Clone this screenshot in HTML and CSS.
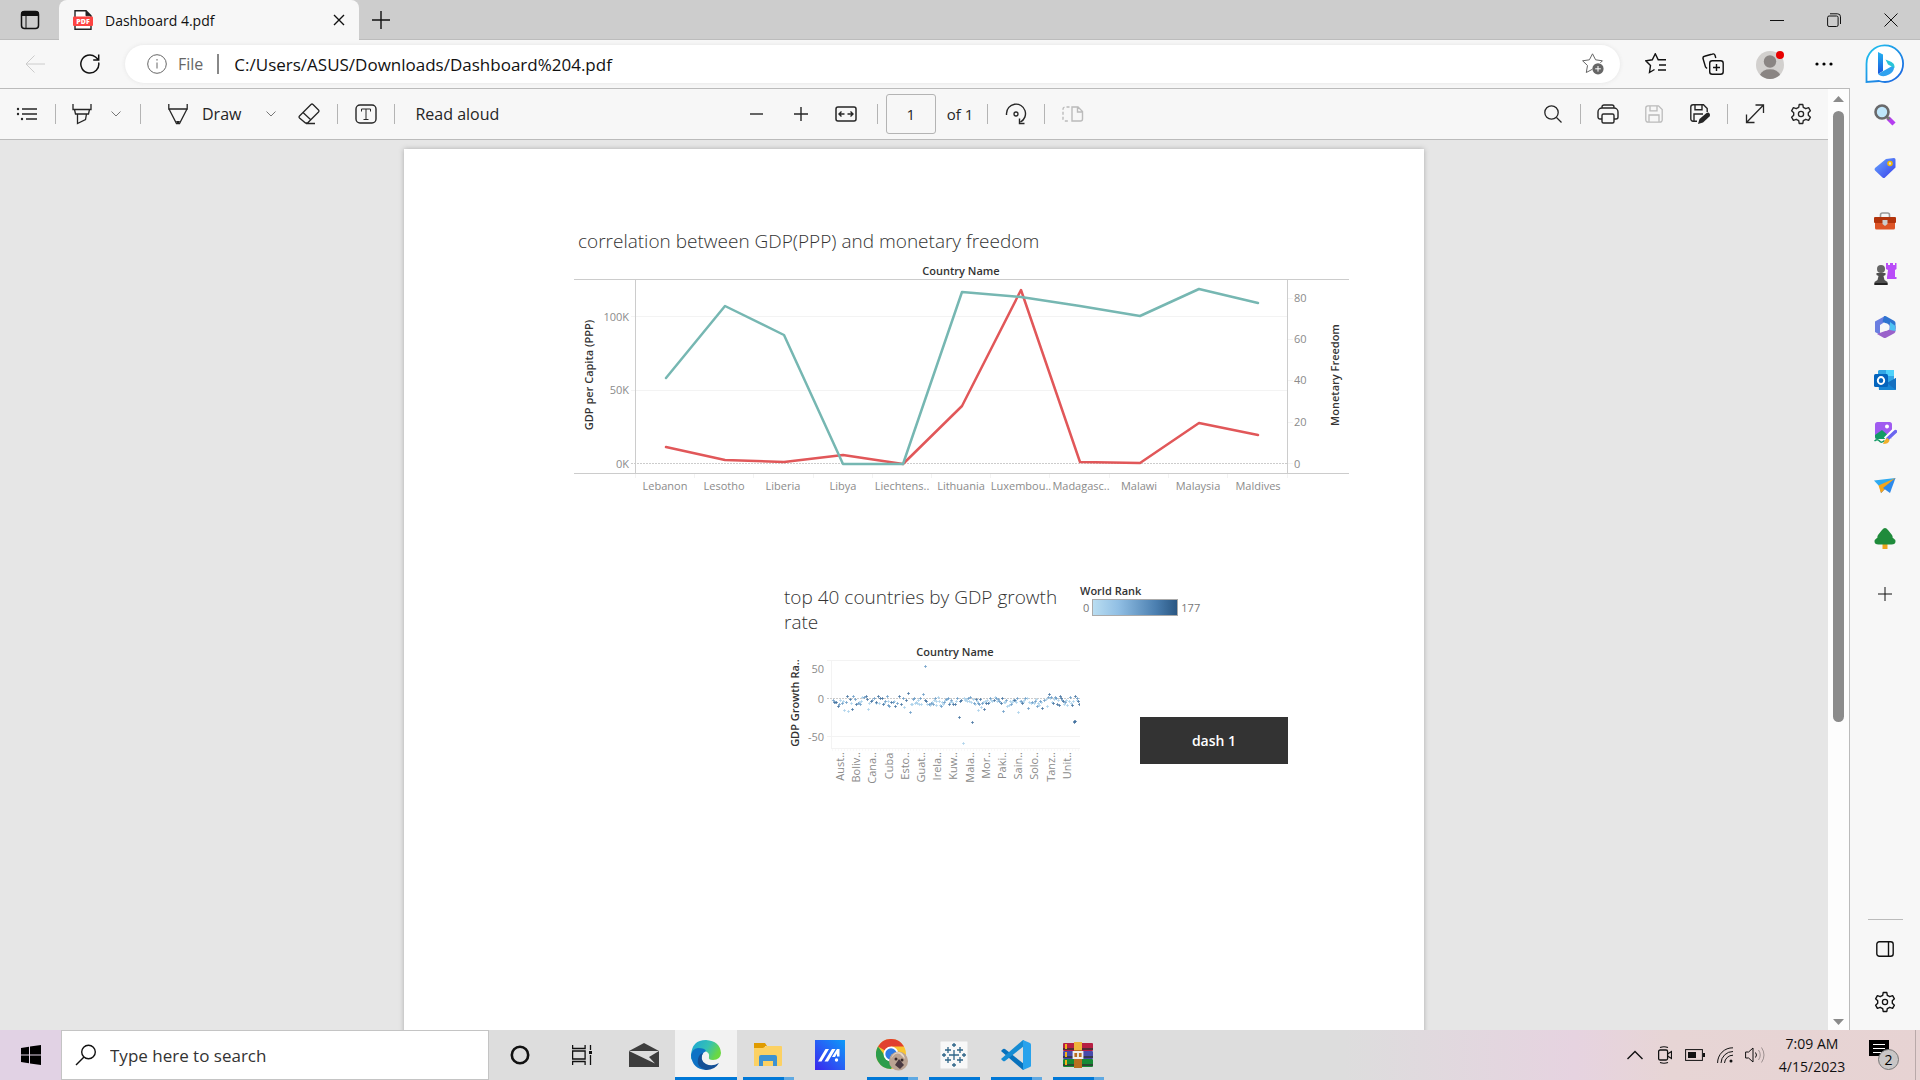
FILE: index.html
```html
<!DOCTYPE html>
<html lang="en">
<head>
<meta charset="utf-8">
<title>Dashboard 4.pdf</title>
<link rel="stylesheet" href="styles.css">
</head>
<body>
<header class="titlebar">
  <button class="tab-menu" aria-label="Tab actions"><svg class="line" width="20" height="20" viewBox="0 0 20 20"><rect x="1.500" y="1.500" width="17" height="17" rx="3" stroke-width="1.500"/><path d="M6 6v12"/><path class="solid" d="M1 6V4a3 3 0 0 1 3-3h12a3 3 0 0 1 3 3v2z"/></svg></button>
  <div class="tab">
    <svg width="20" height="20" viewBox="0 0 20 20"><path d="M2 .8h11l5 5v13.500H2z" fill="#fff" stroke="#222" stroke-width="1.400"/><path d="M13 .8v5h5" fill="#222" stroke="#222"/><rect x="0" y="6.500" width="20" height="9.500" rx="1" fill="#fd4442"/><text x="10" y="14" class="pdf-mark" text-anchor="middle">PDF</text></svg>
    <span class="tab-title">Dashboard 4.pdf</span>
    <button aria-label="Close tab"><svg class="line" width="12" height="12" viewBox="0 0 12 12"><path d="M1 1l10 10M11 1L1 11" stroke-width="1.400"/></svg></button>
  </div>
  <button class="new-tab" aria-label="New tab"><svg class="line" width="18" height="18" viewBox="0 0 18 18"><path d="M9 0v18M0 9h18" stroke-width="1.400"/></svg></button>
  <div class="window-buttons">
    <button aria-label="Minimize"><svg class="line" width="14" height="14" viewBox="0 0 14 14"><path d="M0 7.500h14"/></svg></button>
    <button aria-label="Restore"><svg class="line" width="14" height="14" viewBox="0 0 14 14"><rect x=".6" y="3" width="10.500" height="10.500" rx="1.500"/><path d="M3 .8h7.500a3 3 0 0 1 3 3V11"/></svg></button>
    <button aria-label="Close"><svg class="line" width="14" height="14" viewBox="0 0 14 14"><path d="M.5.5l13 13M13.500.5l-13 13"/></svg></button>
  </div>
</header>

<div class="browser">
  <div class="main">
    <nav class="navbar">
      <button class="back" aria-label="Back"><svg class="line" width="20" height="18" viewBox="0 0 20 18"><path d="M9.500.5L1 9l8.500 8.500M1 9h19"/></svg></button>
      <button class="reload" aria-label="Reload"><svg class="line" width="20" height="20" viewBox="0 0 20 20"><path d="M18.700 8.500A9 9 0 1 1 15.500 3l3 2.800M18.700.5V6h-5.500" stroke-width="1.500"/></svg></button>
      <div class="address">
        <svg class="line info" width="20" height="20" viewBox="0 0 20 20"><circle cx="10" cy="10" r="9.300"/><path d="M10 8.500v6M10 5v1.600"/></svg>
        <span class="scheme">File</span>
        <input type="text" aria-label="Address" value="C:/Users/ASUS/Downloads/Dashboard%204.pdf">
        <button aria-label="Add to favorites"><svg class="line info" width="22" height="22" viewBox="0 0 22 22"><path d="M10.500 16.200L4.300 19.500l1.200-7L.6 7.800l6.800-1L10.500.8l3.100 6 6.800 1-2 2"/><circle cx="16" cy="15.800" r="5.600" fill="#666" stroke="none"/><path d="M16 13v5.600M13.200 15.800h5.600" stroke="#fff"/></svg></button>
      </div>
      <button class="nav-action" aria-label="Favorites"><svg class="line" width="22" height="22" viewBox="0 0 22 22"><path d="M9.500 16.500L4.500 19.500l1-7L.8 7.800l6.500-1 3-6 2.900 6H21M14 12h7M13 17h8" stroke-width="1.400"/></svg></button>
      <button class="nav-action" aria-label="Collections"><svg class="line" width="22" height="22" viewBox="0 0 22 22"><rect x="7.700" y="7.700" width="13.500" height="13.500" rx="2.500" stroke-width="1.400"/><path d="M14.500 11v7M11 14.500h7M5 15.500L3.500 14 1 5.500a2 2 0 0 1 1.500-2.300L10.500 1A2 2 0 0 1 13 2.300L13.800 5" stroke-width="1.400"/></svg></button>
      <button class="nav-action" aria-label="Profile"><svg width="28" height="30" viewBox="0 0 28 30"><circle cx="14" cy="16" r="14" fill="#d2d0ce"/><circle cx="14" cy="12.500" r="6.200" fill="#8a8583"/><path d="M4 25.800a10.500 8 0 0 1 20 0A14 14 0 0 1 4 25.800z" fill="#8a8583"/><circle cx="24" cy="6" r="4" fill="#e80000"/></svg></button>
      <button class="nav-menu" aria-label="Settings and more"><svg width="18" height="4" viewBox="0 0 18 4"><circle cx="2" cy="2" r="1.600"/><circle cx="9" cy="2" r="1.600"/><circle cx="16" cy="2" r="1.600"/></svg></button>
    </nav>

    <div class="document">
      <div class="document-body">
        <div class="toolbar">
          <div class="tools tools-left">
            <button class="w40" aria-label="Contents"><svg class="line" width="22" height="14" viewBox="0 0 22 14"><path d="M6 2h15M6 7h15M10 12h11" stroke-width="1.300"/><circle class="solid" cx="2" cy="2" r="1.200"/><circle class="solid" cx="2" cy="7" r="1.200"/><circle class="solid" cx="6" cy="12" r="1.200"/></svg></button>
            <span class="sep"></span>
            <button class="w36" aria-label="Highlight"><svg class="line" width="20" height="22" viewBox="0 0 20 22"><path d="M1 1v5.500h18V1M2.500 6.500L3.500 11h13l1-4.500M5.500 11v9.500l8-4 1-5.500" stroke-width="1.300"/></svg></button>
            <button class="w32" aria-label="Highlight colors"><svg class="line faint" width="10" height="6" viewBox="0 0 10 6"><path d="M.5.5L5 5 9.500.5"/></svg></button>
            <span class="sep"></span>
            <button class="draw"><svg class="line" width="20" height="22" viewBox="0 0 20 22"><path d="M.8 1v5h18.400V1M1 6l7.500 14.500h3L19 6" stroke-width="1.300"/><path class="solid" d="M8 18h4l-1.500 3h-1z"/></svg>Draw</button>
            <button class="w36" aria-label="Draw options"><svg class="line faint" width="10" height="6" viewBox="0 0 10 6"><path d="M.5.5L5 5 9.500.5"/></svg></button>
            <button class="w40" aria-label="Erase"><svg class="line" width="22" height="22" viewBox="0 0 22 22"><path d="M1.500 13L13 1.500a1.500 1.500 0 0 1 2 0L20.500 7a1.500 1.500 0 0 1 0 2L9.500 20H7.500l-6-5a1.500 1.500 0 0 1 0-2zM5 9.500l8 7.500M8 20.500h9" stroke-width="1.300"/></svg></button>
            <span class="sep"></span>
            <button class="w40" aria-label="Add text"><svg class="line" width="22" height="20" viewBox="0 0 22 20"><rect x="1" y="1" width="20" height="18" rx="4" stroke-width="1.400"/><path d="M6.500 7.500V5h9v2.500M11 5v10.500M8.500 15.500h5"/></svg></button>
            <span class="sep"></span>
            <button class="read">Read aloud</button>
          </div>
          <div class="tools">
            <button class="w44" aria-label="Zoom out"><svg class="line" width="14" height="14" viewBox="0 0 14 14"><path d="M0 7h13" stroke-width="1.400"/></svg></button>
            <button class="w44" aria-label="Zoom in"><svg class="line" width="14" height="14" viewBox="0 0 14 14"><path d="M7 0v14M0 7h14" stroke-width="1.400"/></svg></button>
            <button class="w46" aria-label="Fit to width"><svg class="line" width="22" height="16" viewBox="0 0 22 16"><rect x="1" y="1" width="20" height="14" rx="2" stroke-width="1.500"/><path d="M9.500 8H4M6.500 5.500L4 8l2.500 2.500M12.500 8H18M15.500 5.500L18 8l-2.500 2.500" stroke-width="1.400"/></svg></button>
            <span class="sep"></span>
            <input class="page-number" type="text" aria-label="Page number" value="1">
            <span class="page-count">of 1</span>
            <span class="sep"></span>
            <button class="w40" aria-label="Rotate"><svg class="line" width="22" height="22" viewBox="0 0 22 22"><path d="M1.500 12V10.500a9.500 9.500 0 1 1 14 8.500M14.500 15.500v5h5" stroke-width="1.400"/><circle cx="11" cy="11" r="2" stroke-width="1.300"/></svg></button>
            <span class="sep"></span>
            <button class="w40" aria-label="Page view" disabled><svg class="line" width="22" height="18" viewBox="0 0 22 18"><path d="M10 2h6l4.500 4.500V14a2 2 0 0 1-2 2H10zM15.500 2v5h5" stroke-width="1.400"/><path d="M7.500 2H3a2 2 0 0 0-2 2v10a2 2 0 0 0 2 2h4.500" stroke-width="1.400" stroke-dasharray="3 2"/></svg></button>
          </div>
          <div class="tools tools-right">
            <button class="w46" aria-label="Find"><svg class="line" width="18" height="18" viewBox="0 0 18 18"><circle cx="7.500" cy="7.500" r="6.700" stroke-width="1.300"/><path d="M12.500 12.500l5 5" stroke-width="1.300"/></svg></button>
            <span class="sep"></span>
            <button class="w46" aria-label="Print"><svg class="line" width="22" height="20" viewBox="0 0 22 20"><path d="M5 4V3a2 2 0 0 1 2-2h8a2 2 0 0 1 2 2v1M5 15H3a2 2 0 0 1-2-2V8a4 4 0 0 1 4-4h12a4 4 0 0 1 4 4v5a2 2 0 0 1-2 2h-2" stroke-width="1.400"/><rect x="5" y="10" width="12" height="9" rx="1.500" stroke-width="1.400"/></svg></button>
            <button class="w46" aria-label="Save" disabled><svg class="line" width="18" height="18" viewBox="0 0 18 18"><path d="M3 .8h10.500l3.700 3.700V15a2.200 2.200 0 0 1-2.200 2.200H3A2.200 2.200 0 0 1 .8 15V3A2.200 2.200 0 0 1 3 .8zM5 .8v5h7v-5M4 17v-7h10v7" stroke-width="1.300"/></svg></button>
            <button class="w46" aria-label="Save as"><svg class="line" width="20" height="20" viewBox="0 0 20 20"><path d="M7 17.200H3A2.200 2.200 0 0 1 .8 15V3A2.200 2.200 0 0 1 3 .8h10.500l3.700 3.700V8M5 .8v5h7v-5M4 17v-7h9" stroke-width="1.400"/><path class="solid" d="M8 20l1.500-5L16.500 9q2-1 3 .5t0 3L13 18.500z"/></svg></button>
            <span class="sep"></span>
            <button class="w46" aria-label="Full screen"><svg class="line" width="20" height="20" viewBox="0 0 20 20"><path d="M10.500 1H18.500v8M18.500 1L1.500 18.500M1.500 10.500v8H9.500" stroke-width="1.300"/></svg></button>
            <button class="w46" aria-label="PDF settings"><svg class="line" width="22" height="22" viewBox="0 0 22 22"><path id="gear" d="M9.200 1.500h3.600l.5 2.800 2.500 1.400 2.800-1 1.800 3.100L18.300 9.700v2.600l2.100 1.900-1.800 3.100-2.800-1-2.500 1.400-.5 2.800H9.200l-.5-2.800-2.500-1.400-2.800 1-1.800-3.100 2.100-1.900V9.700L1.600 7.800l1.800-3.100 2.800 1 2.500-1.400z" stroke-width="1.400" stroke-linejoin="round"/><circle cx="11" cy="11" r="2.600" stroke-width="1.300"/></svg></button>
          </div>
        </div>

        <div class="viewer">
          <article class="page">
            <section>
              <h1>correlation between GDP(PPP) and monetary freedom</h1>
              <svg class="chart" viewBox="0 0 775 240">
                <text class="label" x="387" y="15" text-anchor="middle">Country Name</text>
                <path class="grid-line" d="M57 56.500h657M57 130.500h657M714 38.500h5M714 79.500h5M714 120.500h5M714 162.500h5M714 203.500h5M61.500 214v4M120.500 214v4M179.500 214v4M239.500 214v4M298.500 214v4M357.500 214v4M416.500 214v4M475.500 214v4M535.500 214v4M594.500 214v4M653.500 214v4M713.500 214v4"/>
                <path class="zero-line" d="M57 203.500h657"/>
                <path class="frame" d="M0 19.500h775M0 213.500h775M61.500 19v195M713.500 19v195"/>
                <g class="tick" text-anchor="end"><text x="55" y="61">100K</text><text x="55" y="134">50K</text><text x="55" y="208">0K</text></g>
                <g class="tick"><text x="720" y="42">80</text><text x="720" y="83">60</text><text x="720" y="124">40</text><text x="720" y="166">20</text><text x="720" y="208">0</text></g>
                <g class="tick" text-anchor="middle"><text x="91" y="230">Lebanon</text><text x="150" y="230">Lesotho</text><text x="209" y="230">Liberia</text><text x="269" y="230">Libya</text><text x="328" y="230">Liechtens..</text><text x="387" y="230">Lithuania</text><text x="447" y="230">Luxembou..</text><text x="507" y="230">Madagasc..</text><text x="565" y="230">Malawi</text><text x="624" y="230">Malaysia</text><text x="684" y="230">Maldives</text></g>
                <text class="label" text-anchor="middle" transform="translate(19 115) rotate(-90)">GDP per Capita (PPP)</text>
                <text class="label" text-anchor="middle" transform="translate(765 115) rotate(-90)">Monetary Freedom</text>
                <polyline class="gdp" points="92,187 151,200 210,202 269,195 329,204 388,146 447,30 506,202 566,203 625,163 684,175"/>
                <polyline class="freedom" points="92,118 151,46 210,75 269,204 329,204 388,32 447,37 506,46 566,56 625,29 684,43"/>
              </svg>
            </section>
            <section class="growth">
              <div>
                <h1>top 40 countries by GDP growth rate</h1>
                <svg class="chart" viewBox="0 0 296 140">
                  <text class="label" x="171" y="11" text-anchor="middle">Country Name</text>
                  <path class="grid-line" d="M43 15.500h253M43 91.500h253M47.500 15v89M47 103.500h249"/>
                  <path class="grid-line" d="M48 105h248" stroke-dasharray="1 2"/>
                  <path class="zero-line" d="M43 53.500h253"/>
                  <g class="tick" text-anchor="end"><text x="40" y="28">50</text><text x="40" y="58">0</text><text x="40" y="96">-50</text></g>
                  <text class="label" text-anchor="middle" transform="translate(15 58) rotate(-90)">GDP Growth Ra..</text>
                  <g class="tick" id="country-labels"></g>
                  <g id="marks"></g>
                </svg>
              </div>
              <aside>
                <h2>World Rank</h2>
                <div class="legend"><span>0</span><span class="ramp"></span><span>177</span></div>
                <button class="dash-link">dash 1</button>
              </aside>
            </section>
          </article>
        </div>
      </div>
      <div class="scrollbar">
        <svg width="11" height="6" viewBox="0 0 11 6"><path d="M0 6L5.500 0 11 6z" fill="#8b8b8b"/></svg>
        <span class="track"><span class="thumb"></span></span>
        <svg width="11" height="6" viewBox="0 0 11 6"><path d="M0 0l5.500 6L11 0z" fill="#8b8b8b"/></svg>
      </div>
    </div>
  </div>

  <aside class="sidebar">
    <button class="bing" aria-label="Bing"><svg width="40" height="40" viewBox="0 0 40 40"><defs><linearGradient id="bg" x1="0" y1="0" x2="1" y2="1"><stop offset="0" stop-color="#22c8ee"/><stop offset="1" stop-color="#1b5fe0"/></linearGradient><linearGradient id="bb" x1="0" y1="0" x2="0" y2="1"><stop offset="0" stop-color="#25b4f2"/><stop offset="1" stop-color="#1a56dc"/></linearGradient></defs><path d="M1.500 38V20A18.300 18.300 0 1 1 20 38q-3 0-6-1z" fill="#fff" stroke="url(#bg)" stroke-width="1.800"/><path d="M13 8l5 2.500V27l-5 3z" fill="url(#bb)"/><path d="M13 30l16-9v3q-.5 4-5 6.500-5 3-9 1z" fill="#2fa2ef"/><path d="M20.500 15.500l6 2.500q3.500 2 3 6L23 20.500z" fill="#29c5d8"/></svg></button>
    <button aria-label="Search"><svg width="24" height="24" viewBox="0 0 24 24"><path d="M15 15l6 6" stroke="#b53df0" stroke-width="4.500"/><path d="M13.500 13.500l3 3" stroke="#777" stroke-width="3"/><circle cx="9" cy="9" r="6.500" fill="#bfe6fb" stroke="#69696b" stroke-width="2.600"/></svg></button>
    <button aria-label="Shopping"><svg width="24" height="24" viewBox="0 0 24 24"><defs><linearGradient id="tg" x1="0" y1="0" x2="1" y2="1"><stop offset="0" stop-color="#67a8ff"/><stop offset="1" stop-color="#3a3eea"/></linearGradient></defs><path d="M13 3l8-1q1.500 0 1.500 1.500v8L12 21.500q-1 1-2.500 0L2 14.500q-1-1.500 0-2.500z" fill="url(#tg)"/><circle cx="17" cy="7.500" r="2" fill="#ddd" stroke="#f3b900" stroke-width="1.600"/></svg></button>
    <button aria-label="Tools"><svg width="24" height="24" viewBox="0 0 24 24"><path d="M7.500 8V6q0-2 2-2h5q2 0 2 2v2" fill="none" stroke="#999" stroke-width="1.600"/><path d="M2 11h20v8q0 1.500-1.500 1.500h-17Q2 20.500 2 19z" fill="#dd5426"/><rect x="1" y="8" width="22" height="6" rx="1" fill="#b3340c"/><path d="M9.500 11h5v4l-2.500 2-2.500-2z" fill="#ccc"/></svg></button>
    <button aria-label="Games"><svg width="24" height="24" viewBox="0 0 24 24"><path d="M13 1h2v2h2V1h3v2h2V1h1.500v6l-1.500 1v7h1.500v2H14v-2l1-7-2-1z" fill="#b94cf8"/><circle cx="8" cy="7" r="4" fill="#666"/><path d="M3.500 11h9v2l-2 1 1 4 3 2v3h-13v-3l3-2 1-4-2-1z" fill="#505050"/><path d="M1.500 21h13v2h-13z" fill="#222"/></svg></button>
    <button aria-label="Microsoft 365"><svg width="24" height="24" viewBox="0 0 24 24"><path d="M12 1L2 6.500V17l5 2.800V10l7-4.500z" fill="#6b7ee0"/><path d="M11 1.200q1-.5 2 0l8 4.500q1.500.7 1.500 2.300v6l-6-3.500-7-4z" fill="#2e74d0"/><path d="M22.500 11v5q0 1.500-1.200 2.200L13 22.800q-1.200.6-2.400 0L4 19l4-1.500 8.500-3V9z" fill="#9a62ca"/><path d="M17 7l5.500 4v5l-6-1z" fill="#4ec2f3"/><circle cx="12.500" cy="12" r="3.800" fill="#f8f8f8"/></svg></button>
    <button aria-label="Outlook"><svg width="24" height="24" viewBox="0 0 24 24"><path d="M6 2h14q1 0 1 1v12H5V3z" fill="#31a6e6"/><path d="M13 2h8v6h-8z" fill="#4fd2fb"/><path d="M5 12l9 3 9-5v11q0 1-1 1H6z" fill="#1685d4"/><path d="M14 15l9 7V10z" fill="#1670c0"/><rect x="1" y="6" width="14" height="13" rx="1.500" fill="#0464bd"/><ellipse cx="8" cy="12.500" rx="3.200" ry="3.500" fill="none" stroke="#fff" stroke-width="1.900"/></svg></button>
    <button aria-label="Image creator"><svg width="24" height="24" viewBox="0 0 24 24"><rect x="2" y="1" width="17" height="17" rx="2.500" fill="#a05bf0"/><circle cx="14" cy="5.500" r="2" fill="#fff"/><path d="M2 14l7-5 8 7-2 2H4q-2 0-2-2z" fill="#139b65"/><path d="M1.500 20q3-2.500 5 0t5-.5" fill="none" stroke="#139b65" stroke-width="1.500"/><path d="M22 9.500l-9 9" stroke="#fff" stroke-width="6"/><path d="M22.500 10.500l-7.500 7" stroke="#6b66ef" stroke-width="3.500" stroke-linecap="round"/><path d="M10 23q2-5 4.500-6l2 2.500q-1 3.500-6.500 3.500z" fill="#f2af2a"/></svg></button>
    <button aria-label="Drop"><svg width="24" height="24" viewBox="0 0 24 24"><path d="M1 6.500L22.500 4 7 13z" fill="#2faaf0"/><path d="M22.500 4L7 13l1 6z" fill="#163e83"/><path d="M22.500 4L5.500 11.500 8 19z" fill="#f5a51b"/><path d="M22.500 4L10 14l7 5z" fill="#2c89ec"/></svg></button>
    <button aria-label="E-tree"><svg width="24" height="24" viewBox="0 0 24 24"><path d="M9.500 17h5v5h-5z" fill="#f0a51d"/><path d="M12 1q1.500 0 3 2l4 5q1 1.500.5 2.500 3 2 3 4 0 3-4 3H5.500q-4 0-4-3 0-2 3-4-.5-1 .5-2.500l4-5q1.500-2 3-2z" fill="#1f8b3b"/></svg></button>
    <button class="add" aria-label="Customize"><svg class="line" width="14" height="14" viewBox="0 0 14 14"><path d="M7 0v14M0 7h14"/></svg></button>
    <hr>
    <button aria-label="Hide sidebar"><svg class="line" width="18" height="16" viewBox="0 0 18 16"><rect x=".8" y=".8" width="16.400" height="14.400" rx="2.500" stroke-width="1.400"/><path d="M12.500 1v14" stroke-width="1.400"/></svg></button>
    <button aria-label="Sidebar settings"><svg class="line" width="22" height="22" viewBox="0 0 22 22"><use href="#gear"/><circle cx="11" cy="11" r="2.600" stroke-width="1.300"/></svg></button>
  </aside>
</div>

<footer class="taskbar">
  <button class="start" aria-label="Start"><svg width="20" height="20" viewBox="0 0 20 20"><path d="M0 3l8-1.200v7.700H0zM9 1.600L20 0v9.500H9zM0 10.500h8v7.700L0 17zM9 10.500h11V20L9 18.400z"/></svg></button>
  <label class="search"><svg class="line" width="22" height="22" viewBox="0 0 22 22"><circle cx="13.500" cy="8" r="6.800" stroke-width="1.400"/><path d="M9 13l-8 8" stroke-width="1.400"/></svg><input type="text" aria-label="Search" placeholder="Type here to search"></label>
  <div class="apps">
    <button aria-label="Cortana"><svg class="line" width="20" height="20" viewBox="0 0 20 20"><circle cx="10" cy="10" r="8.200" stroke-width="2.600"/></svg></button>
    <button aria-label="Task view"><svg class="line" width="20" height="20" viewBox="0 0 20 20"><path d="M.6 0v3.500h12.500V0M.6 20v-3.500h12.500V20M.6 6h12.500v8H.6zM18.500 0v5M18.500 10v10" stroke-width="1.300"/><path class="solid" d="M17 6h3v3h-3z"/></svg></button>
    <button aria-label="Mail"><svg width="30" height="24" viewBox="0 0 30 24"><path d="M0 8L15 0l15 8v16H0z" fill="#3d3d3d"/><path d="M0 8h30l-10 6 6 6.500z" fill="#ddd"/></svg></button>
    <button class="active" aria-label="Edge"><svg width="30" height="30" viewBox="0 0 30 30"><defs><linearGradient id="eg" x1="0" y1="0" x2="1" y2=".4"><stop offset="0" stop-color="#1ca5d8"/><stop offset=".6" stop-color="#35c1b4"/><stop offset="1" stop-color="#6bd842"/></linearGradient></defs><path d="M0 15Q1 0 15 0q14 1 15 13-.5 7-8 7-5 0-4-3 1-5-5-6-9 0-13 9z" fill="url(#eg)"/><path d="M0 15q1-6 7-7 7 0 8 3-6 3-4 10 3 6 10 6-3 3-6 3Q1 29 0 15z" fill="#0e72c5"/><path d="M12 13q-4 7 3 11 6 3 13-1-4 7-13 7-10-3-8-11 1-5 5-6z" fill="#134f96"/></svg></button>
    <button class="running multi" aria-label="File Explorer"><svg width="28" height="24" viewBox="0 0 28 24"><path d="M0 0h11l2 3h-2v4H0z" fill="#e09b00"/><path d="M0 5h9l3-2h15q1 0 1 1v18q0 1-1 1H0z" fill="#fcd163"/><path d="M5 23v-9q0-2 2-2h14q2 0 2 2v9h-4v-5H9v5z" fill="#3d92d2"/></svg></button>
    <button aria-label="MyASUS"><svg width="30" height="30" viewBox="0 0 30 30"><defs><linearGradient id="ag" x1="0" y1="1" x2="1" y2="0"><stop offset="0" stop-color="#3b25ec"/><stop offset=".5" stop-color="#2760f5"/><stop offset="1" stop-color="#0c9bf8"/></linearGradient></defs><path d="M0 0h30v30H0z" fill="url(#ag)"/><path d="M3 21.500h3.500L14 9h-3.500zM9.500 21.500H13L20.500 9H17zM18.500 14.500L22 9h2.500v7.500H22v-3l-2 3.500h-3z" fill="#fff"/><circle cx="21.500" cy="20" r="1.700" fill="#fff"/></svg></button>
    <button class="running multi" aria-label="Chrome"><svg width="32" height="32" viewBox="0 0 32 32"><circle cx="15" cy="15" r="15" fill="#f9c531"/><path d="M15 15L2 7.500A15 15 0 0 1 28 7.500H15z" fill="#e1402f"/><path d="M15 15l-5 3L2 7.500A15 15 0 0 0 15 30l6-11z" fill="#2d9d4c"/><circle cx="15" cy="15" r="7.500" fill="#fff"/><circle cx="15" cy="15" r="5.700" fill="#2e7be6"/><circle cx="22.500" cy="22" r="9.500" fill="#baa393"/><path d="M15 20q4-7 9-5l5 5q-1-6-6-7-6 0-8 7z" fill="#e8d8c8"/><path d="M19 26l4-6 5 6-4 4z" fill="#4a3a42"/><circle cx="20" cy="20" r="1.500" fill="#392a2a"/><circle cx="26" cy="21" r="1.500" fill="#392a2a"/></svg></button>
    <button class="running" aria-label="Tableau"><svg width="28" height="28" viewBox="0 0 28 28"><rect width="28" height="28" rx="1" fill="#f8f8f8" stroke="#ddd"/><path d="M14 9v10M9 14h10M8 6v6M5 9h6M20 6v6M17 9h6M8 16v6M5 19h6M20 16v6M17 19h6M14 2v4M12 4h4M14 22v4M12 24h4M4 12v4M2 14h4M24 12v4M22 14h4" stroke="#2f6588" stroke-width="1.300"/></svg></button>
    <button class="running multi" aria-label="Visual Studio Code"><svg width="30" height="30" viewBox="0 0 30 30"><path d="M0 11l2-2q1-.5 2 0l19 15v5.500L22 30z" fill="#0872bd"/><path d="M0 19l2 2q1 .5 2 0L23 6V.5L22 0z" fill="#168cd3"/><path d="M22 0l7 3q1 .5 1 1.500v21q0 1-1 1.500l-7 3V0z" fill="#28a2ec"/></svg></button>
    <button class="running multi" aria-label="WinRAR"><svg width="30" height="26" viewBox="0 0 30 26"><rect y="1" width="30" height="8" rx="1" fill="#b71f43"/><rect y="9" width="30" height="8" rx="1" fill="#484aaa"/><rect y="17" width="30" height="8" rx="1" fill="#168a35"/><path d="M0 7h30M0 15h30M0 23h30" stroke="#333" stroke-width="1.500"/><path d="M3 2v5M3 10v5M3 18v5" stroke="#f2b21a" stroke-width="2"/><path d="M11 0h8v26h-8z" fill="#b96f20"/><path d="M11 0h8v8h-8z" fill="#efb43b"/><path d="M10.500 10h9v6h-9zM15 9v6" fill="none" stroke="#eee" stroke-width="1.800"/></svg></button>
  </div>
  <div class="tray">
    <button aria-label="Show hidden icons"><svg class="line" width="16" height="10" viewBox="0 0 16 10"><path d="M.5 9L8 1.500 15.500 9" stroke-width="1.400"/></svg></button>
    <button aria-label="Meet now"><svg class="line" width="14" height="18" viewBox="0 0 14 18"><rect x=".6" y="4" width="9" height="10" rx="1.500" stroke-width="1.300"/><path d="M9.500 8L13.500 5.500v7L9.500 10M2 1.500Q6 0 10 1.500M2 16.500q4 1.500 8 0" stroke-width="1.200"/></svg></button>
    <button aria-label="Battery"><svg class="line" width="20" height="12" viewBox="0 0 20 12"><rect x=".6" y=".6" width="16.800" height="10.800"/><path class="solid" d="M3 3h8v6H3zM18 4h2v4h-2z"/></svg></button>
    <button aria-label="Wi-Fi"><svg class="line" width="16" height="16" viewBox="0 0 16 16"><path d="M.6 16A15 15 0 0 1 16 .8M4 16A12 12 0 0 1 16 4.500M7.500 16A8.500 8.500 0 0 1 16 8.200"/><circle class="solid" cx="14" cy="14" r="1.500"/></svg></button>
    <button aria-label="Volume"><svg class="line" width="20" height="18" viewBox="0 0 20 18"><path d="M.6 6h3L8 2v14l-4.400-4h-3zM10.500 6.500q2 2.500 0 5"/><path d="M13.500 4q3.500 5 0 10M16.500 1.500q5 7.500 0 15" opacity=".35"/></svg></button>
    <button class="clock"><span>7:09 AM</span><span>4/15/2023</span></button>
    <button class="notifications" aria-label="Notifications"><svg width="32" height="32" viewBox="0 0 32 32"><path d="M0 1h20v16h-3v4l-4-4H0z"/><path d="M4 5.500h12M4 9.500h12M4 13.500h12" stroke="#fff"/><circle cx="19.500" cy="20.500" r="10" fill="#c9c6c6" stroke="#777"/><text x="19.500" y="26" text-anchor="middle">2</text></svg></button>
    <span class="show-desktop"></span>
  </div>
</footer>
<script src="chart.js"></script>
</body>
</html>
```
FILE: styles.css
```css
* { box-sizing: border-box; }
html, body { height: 100%; }
body {
  margin: 0;
  display: flex;
  flex-direction: column;
  overflow: hidden;
  background: #f7f7f7;
  color: #111;
  font-family: "Open Sans", "Noto Sans", sans-serif;
  font-size: 16px;
}
button, input { font: inherit; color: inherit; }
button {
  display: flex;
  align-items: center;
  justify-content: center;
  flex: none;
  padding: 0;
  border: 0;
  background: none;
}
svg { display: block; flex: none; }
.line { fill: none; stroke: currentColor; }
.solid { fill: currentColor; stroke: none; }

.titlebar {
  flex: none;
  height: 40px;
  display: flex;
  background: #cdcdcd;
  box-shadow: inset 0 -1px #bcbcbc;
}
.tab-menu { width: 59px; }
.tab {
  width: 300px;
  display: flex;
  align-items: center;
  gap: 12px;
  padding: 0 14px;
  border-radius: 8px 8px 0 0;
  background: #f7f7f7;
}
.tab-title { flex: 1; font-size: 14px; }
.new-tab { width: 44px; }
.window-buttons { display: flex; margin-left: auto; padding-right: 1px; }
.window-buttons button { width: 57px; }
.pdf-mark { font-size: 7px; font-weight: 800; fill: #fff; }

.browser { flex: 1; min-height: 0; display: flex; }
.main { flex: 1; min-width: 0; display: flex; flex-direction: column; }
.navbar { flex: none; height: 48px; display: flex; align-items: center; }
.back { width: 70px; color: #ccc; }
.reload { width: 40px; }
.address {
  flex: 1;
  height: 38px;
  margin: 0 7px 0 15px;
  padding: 0 16px 0 22px;
  display: flex;
  align-items: center;
  border-radius: 19px;
  background: #fff;
  box-shadow: 0 0 4px #e4e4e4;
}
.info { color: #666; }
.scheme {
  margin: 0 15px 0 11px;
  padding-right: 14px;
  border-right: 2px solid #888;
  color: #666;
  line-height: 20px;
}
.address input { flex: 1; min-width: 0; padding: 0; border: 0; outline: 0; background: none; font-size: 17px; }
.nav-action { width: 57px; }
.nav-menu { width: 52px; }

.document { flex: 1; min-height: 0; display: flex; border: 1px solid #bbb; border-width: 1px 1px 0 0; }
.document-body { flex: 1; min-width: 0; display: flex; flex-direction: column; }
.toolbar {
  flex: none;
  height: 51px;
  display: grid;
  grid-template-columns: 1fr auto 1fr;
  border-bottom: 1px solid #bbb;
  color: #262626;
}
.tools { display: flex; align-items: center; }
.tools button { height: 40px; }
.tools button:disabled { color: #bbb; }
.tools-left { padding-left: 7px; }
.tools-right { justify-content: flex-end; padding-right: 4px; }
.sep { width: 1px; height: 20px; margin: 0 8px; background: #b4b4b4; }
.tools-right .sep { margin: 0 4px; }
.w32 { width: 32px; }
.w36 { width: 36px; }
.w40 { width: 40px; }
.w44 { width: 44px; }
.w46 { width: 46px; }
.faint { color: #777; }
.tools .draw { gap: 14px; padding: 0 12px 0 19px; }
.tools .read { padding: 0 12px; }
.page-number {
  width: 50px;
  height: 40px;
  padding: 0;
  border: 1px solid #b4b4b4;
  border-radius: 3px;
  background: none;
  text-align: center;
  font-size: 15px;
}
.page-count { padding: 0 6px 0 11px; font-size: 15px; }

.viewer { flex: 1; min-height: 0; overflow: hidden; padding-top: 9px; background: #e6e6e6; }
.page {
  max-width: 1020px;
  min-height: 1320px;
  margin: 0 auto;
  padding: 79px 75px 0 170px;
  background: #fff;
  box-shadow: 0 0 5px #aaa;
}
h1 { margin: 0; padding-left: 4px; color: #333; font-size: 19px; font-weight: 300; line-height: 26px; }
.chart { width: 100%; font-size: 11px; }
section > .chart { margin-top: 6px; }
.label { fill: #333; font-size: 11px; font-weight: 600; }
.tick { fill: #8b8b8b; }
.grid-line { fill: none; stroke: #f3f3f3; }
.zero-line { fill: none; stroke: #ccc; stroke-dasharray: 2 1; }
.frame { fill: none; stroke: #ccc; }
.gdp, .freedom { fill: none; stroke-width: 2.500; stroke-linecap: round; stroke-linejoin: round; }
.gdp { stroke: #e15759; }
.freedom { stroke: #76b7b2; }

.growth {
  display: grid;
  grid-template-columns: 296px 1fr;
  margin: 82px 0 0 210px;
}
.growth h1 { padding: 3px 12px 0 0; line-height: 25px; }
.growth .chart { margin-top: 10px; }
h2 { margin: 0; color: #333; font-size: 11px; font-weight: 600; line-height: 17px; }
.legend { display: flex; gap: 3px; padding-left: 3px; color: #777; font-size: 11px; line-height: 17px; }
.ramp {
  width: 86px;
  border: 1px solid #aaa;
  background: linear-gradient(90deg, #b9ddf1, #91bfe4 30%, #4b7fb0 75%, #2a5783);
}
.dash-link {
  width: 148px;
  height: 47px;
  margin: 101px 0 0 60px;
  background: #333;
  color: #fff;
  font-size: 14px;
  font-weight: 600;
}

.scrollbar {
  flex: none;
  width: 21px;
  display: flex;
  flex-direction: column;
  align-items: center;
  gap: 9px;
  padding: 7px 0 5px;
  background: #fdfdfd;
}
.track { flex: 1; }
.thumb { display: block; width: 11px; height: 68%; border-radius: 6px; background: #8b8b8b; }

.sidebar { flex: none; width: 70px; display: flex; flex-direction: column; align-items: center; padding-bottom: 2px; }
.sidebar button { width: 48px; height: 53px; }
.sidebar .bing { height: 48px; }
.sidebar .add { height: 57px; }
.sidebar hr { width: 35px; margin: auto 0 2px; border: 0; border-top: 1px solid #bbb; }

.taskbar {
  flex: none;
  height: 50px;
  display: flex;
  background: linear-gradient(90deg, #ddd 70%, #e6d3e0 82%, #e7d5d5 87%, #e7d3d3);
}
.start { width: 61px; background: #e1d2e4; }
.search {
  width: 428px;
  display: flex;
  align-items: center;
  gap: 13px;
  padding-left: 13px;
  border: 1px solid #c4c4c4;
  background: #fff;
}
.search input { flex: 1; padding: 0; border: 0; outline: 0; background: none; font-size: 17px; }
.search input::placeholder { color: #333; opacity: 1; }
.apps { display: flex; }
.apps button { width: 62px; border: 0 solid #0078d7; border-width: 3px 0; border-color: transparent; }
.apps .active { background: #f2f2f2; border-bottom-color: #0078d7; }
.apps .running { background: linear-gradient(#0078d7, #0078d7) 6px 100% / 51px 3px no-repeat border-box; }
.apps .multi { background: linear-gradient(90deg, #0078d7 41px, #60a9e2 41px) 6px 100% / 51px 3px no-repeat border-box; }
.tray { display: flex; margin-left: auto; }
.tray button { width: 30px; }
.tray .clock { width: 84px; flex-direction: column; font-size: 14px; line-height: 23px; }
.tray .notifications { width: 61px; font-size: 14px; }
.show-desktop { width: 5px; border-left: 1px solid #b9a9a9; }
```
FILE: chart.js
```js
// Country names under the growth chart, read bottom to top.
const svgNS = "http://www.w3.org/2000/svg";
const countries = ["Aust..", "Boliv..", "Cana..", "Cuba", "Esto..", "Guat..", "Irela..", "Kuw..", "Mala..", "Mor..", "Paki..", "Sain..", "Solo..", "Tanz..", "Unit.."];
const labels = document.getElementById("country-labels");
countries.forEach((name, i) => {
  const text = document.createElementNS(svgNS, "text");
  text.setAttribute("text-anchor", name === "Cuba" ? "middle" : "end");
  const y = name === "Cuba" ? 121 : 107;
  text.setAttribute("transform", `translate(${60 + Math.round(i * 16.2)} ${y}) rotate(-90)`);
  text.textContent = name;
  labels.append(text);
});

// Marks as x, y pairs in thirds of a unit, one list for each band of world rank.
const bands = {
  "#a8d0ea": [76,169,88,172,64,139,73,142,97,148,121,145,127,142,130,130,148,165,151,148,172,148,181,148,196,148,208,142,226,142,256,160,277,151,280,151,289,148,292,145,295,148,298,139,301,151,307,151,325,151,332,154,338,145,344,139,350,154,352,142,356,129,361,142,364,154,370,145,373,151,379,139,385,136,394,145,400,145,412,142,433,268,436,133,439,139,442,136,445,142,451,142,457,145,463,136,469,151,475,142,478,169,487,160,493,145,499,142,505,139,511,145,517,139,520,142,529,130,535,142,544,145,556,145,559,145,565,157,571,154,574,142,580,145,583,139,592,145,598,175,604,142,613,145,616,139,625,133,631,145,637,148,646,148,652,136,658,148,661,154,667,145,682,136,684,157,694,133,700,145,706,136,718,139,736,151,742,139,745,154,751,142,757,148,763,142,775,139],
  "#6a9bc6": [319,35,43,139,49,145,61,151,68,148,80,145,103,127,109,135,118,148,124,151,136,129,160,139,166,133,199,142,203,127,206,154,211,157,223,145,235,148,253,133,272,175,283,136,286,133,311,121,304,133,329,151,335,148,341,151,347,131,367,157,376,145,382,136,388,133,397,139,415,133,448,133,454,130,466,148,478,148,481,151,490,148,514,133,532,133,538,136,541,142,553,172,562,139,577,151,589,139,595,133,607,141,619,131,628,163,640,145,649,142,655,157,664,142,676,139,688,129,697,130,709,130,712,133,730,139,739,145,754,130,773,133],
  "#41709e": [85,125,52,143,56,157,100,165,112,151,145,136,142,125,178,127,190,133,184,133,170,145,155,142,193,151,217,145,229,157,241,125,266,118,262,139,247,151,317,139,322,142,391,151,427,139,424,142,421,190,460,205,403,151,409,151,472,136,484,136,502,148,508,148,496,166,526,139,550,133,547,148,586,139,610,148,670,163,691,121,703,148,715,151,721,153,724,127,727,133,760,154,769,127,781,151,778,142,733,142,764,201,767,202,764,204,46,145,92,136]
};
const marks = document.getElementById("marks");
for (const [color, values] of Object.entries(bands)) {
  let d = "";
  for (let i = 0; i < values.length; i += 2) {
    const x = Math.round(values[i] / 3) + 35;
    const y = Math.round(values[i + 1] / 3) + 9;
    d += `M${x - 1} ${y + 0.5}h3M${x + 0.5} ${y - 1}v3`;
  }
  const path = document.createElementNS(svgNS, "path");
  path.setAttribute("d", d);
  path.setAttribute("stroke", color);
  path.setAttribute("stroke-width", "1");
  path.setAttribute("stroke-opacity", "0.7");
  marks.append(path);
}
```
